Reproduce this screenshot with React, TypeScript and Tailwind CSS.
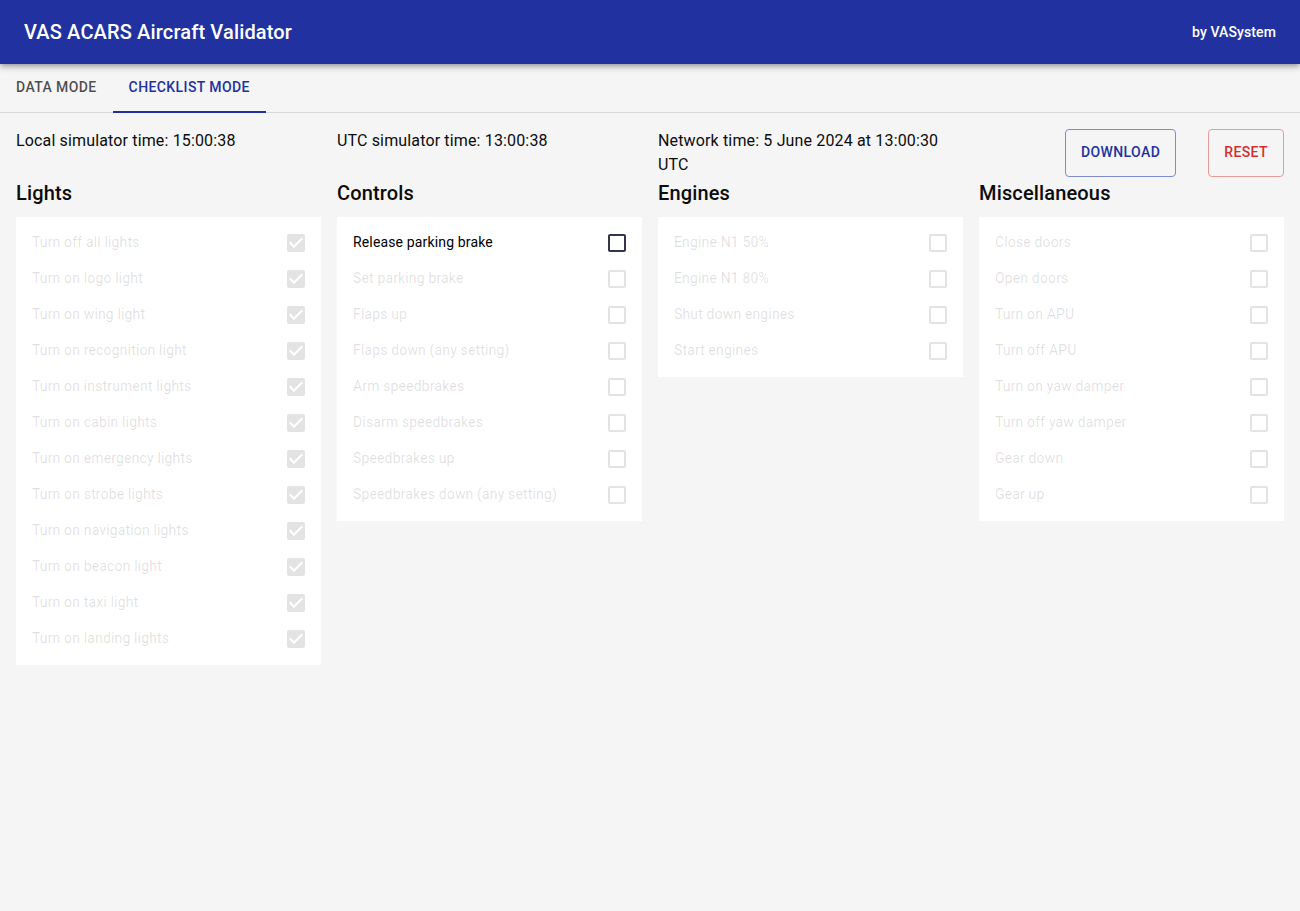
import React from "react";

const CHECKED = "M19 3H5c-1.11 0-2 .9-2 2v14c0 1.1.89 2 2 2h14c1.11 0 2-.9 2-2V5c0-1.1-.89-2-2-2zm-9 14l-5-5 1.41-1.41L10 14.17l7.59-7.59L19 8l-9 9z";
const BLANK = "M19 5v14H5V5h14m0-2H5c-1.1 0-2 .9-2 2v14c0 1.1.9 2 2 2h14c1.1 0 2-.9 2-2V5c0-1.1-.9-2-2-2z";

type Item = { label: string; checked?: boolean; active?: boolean };

function Row({ label, checked, active }: Item) {
  return (
    <div className="flex h-9 items-center justify-between pl-4 pr-[13px]">
      <span className={active ? "-mt-0.5 text-sm tracking-[0.15px] text-black" : "-mt-0.5 text-sm tracking-[0.15px] text-black/[0.13]"}>{label}</span>
      <svg viewBox="0 0 24 24" className={active ? "h-6 w-6 fill-[#33364a]" : "h-6 w-6 fill-black/[0.11]"}>
        <path d={checked ? CHECKED : BLANK} />
      </svg>
    </div>
  );
}

function Column({ title, items }: { title: string; items: Item[] }) {
  return (
    <div>
      <h2 className="mb-2 text-xl leading-8 font-medium tracking-[0.15px] text-[#0c0c0c]">{title}</h2>
      <div className="bg-white py-2">
        {items.map((i) => (
          <Row key={i.label} {...i} />
        ))}
      </div>
    </div>
  );
}

const lights: Item[] = [
  "Turn off all lights",
  "Turn on logo light",
  "Turn on wing light",
  "Turn on recognition light",
  "Turn on instrument lights",
  "Turn on cabin lights",
  "Turn on emergency lights",
  "Turn on strobe lights",
  "Turn on navigation lights",
  "Turn on beacon light",
  "Turn on taxi light",
  "Turn on landing lights",
].map((label) => ({ label, checked: true }));

const controls: Item[] = [
  { label: "Release parking brake", active: true },
  ...[
    "Set parking brake",
    "Flaps up",
    "Flaps down (any setting)",
    "Arm speedbrakes",
    "Disarm speedbrakes",
    "Speedbrakes up",
    "Speedbrakes down (any setting)",
  ].map((label) => ({ label })),
];

const engines: Item[] = ["Engine N1 50%", "Engine N1 80%", "Shut down engines", "Start engines"].map((label) => ({ label }));

const misc: Item[] = [
  "Close doors",
  "Open doors",
  "Turn on APU",
  "Turn off APU",
  "Turn on yaw damper",
  "Turn off yaw damper",
  "Gear down",
  "Gear up",
].map((label) => ({ label }));

export default function App() {
  return (
    <div className="min-h-[911px] bg-[#f5f5f5] font-['Roboto',sans-serif] text-[#0c0c0c]">
      <header className="relative z-10 flex h-16 items-center justify-between bg-[#2132a0] px-6 text-white shadow-[0_2px_4px_-1px_rgba(0,0,0,0.2),0_4px_5px_0_rgba(0,0,0,0.14),0_1px_10px_0_rgba(0,0,0,0.12)]">
        <h1 className="text-xl font-medium tracking-[0.15px]">VAS ACARS Aircraft Validator</h1>
        <span className="text-sm font-medium tracking-[0.1px]">by VASystem</span>
      </header>
      <nav className="flex h-[49px] border-b border-[#d9d9d9]">
        <div className="-mt-px flex h-12 items-center px-4 text-sm font-medium tracking-[0.4px] text-black/70">DATA MODE</div>
        <div className="flex h-[49px] items-center border-b-2 border-[#2132a0] px-4 pb-0.5 text-sm font-medium tracking-[0.4px] text-[#2132a0]">
          CHECKLIST MODE
        </div>
      </nav>
      <main className="grid grid-cols-4 gap-x-4 p-4">
        <div className="h-12 leading-6 tracking-[0.15px]">Local simulator time: 15:00:38</div>
        <div className="h-12 leading-6 tracking-[0.15px]">UTC simulator time: 13:00:38</div>
        <div className="h-12 leading-6 tracking-[0.15px]">Network time: 5 June 2024 at 13:00:30 UTC</div>
        <div className="flex h-12 justify-end gap-8">
          <button className="rounded border border-[#7d8cd0] px-[15px] pb-0.5 text-sm font-medium tracking-[0.4px] text-[#2132a0]">DOWNLOAD</button>
          <button className="rounded border border-[#e69a9a] px-[15px] pb-0.5 text-sm font-medium tracking-[0.4px] text-[#d32f2f]">RESET</button>
        </div>
        <div className="col-span-4 grid grid-cols-4 items-start gap-x-4">
          <Column title="Lights" items={lights} />
          <Column title="Controls" items={controls} />
          <Column title="Engines" items={engines} />
          <Column title="Miscellaneous" items={misc} />
        </div>
      </main>
    </div>
  );
}
